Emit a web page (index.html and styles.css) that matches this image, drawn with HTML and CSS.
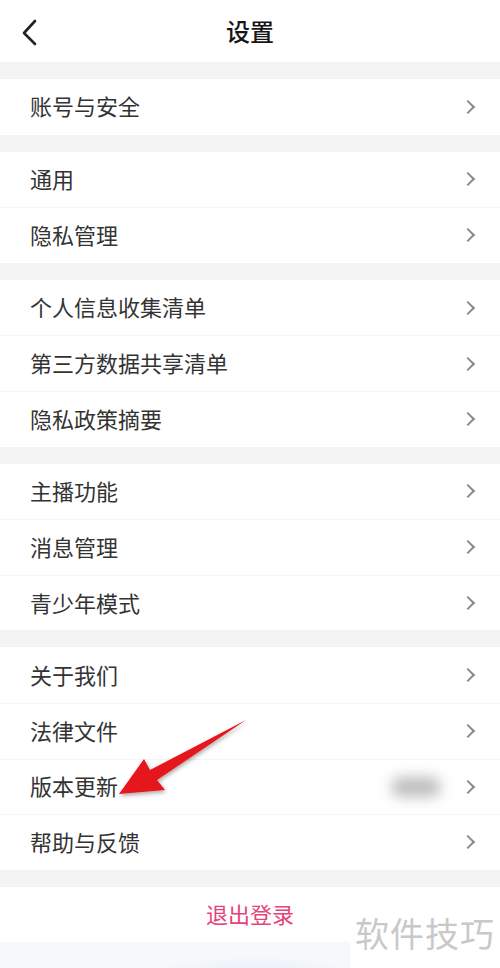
FILE: index.html
```html
<!DOCTYPE html>
<html lang="zh-CN">
<head>
  <meta charset="UTF-8" />
  <meta name="viewport" content="width=device-width, initial-scale=1.0" />
  <title>设置</title>
  <link rel="stylesheet" href="styles.css">
</head>
<body>
  <div class="page">
    <div class="header">
      <svg class="back" width="20" height="30" viewBox="0 0 20 30">
        <polyline points="14,4 3,16 14,27" fill="none" stroke="#222" stroke-width="2.6" stroke-linecap="round" stroke-linejoin="round"/>
      </svg>
      <div class="title">设置</div>
    </div>

    <div class="group">
      <div class="row"><span class="label">账号与安全</span><span class="chev"></span></div>
    </div>

    <div class="group">
      <div class="row"><span class="label">通用</span><span class="chev"></span></div>
      <div class="row"><span class="label">隐私管理</span><span class="chev"></span></div>
    </div>

    <div class="group">
      <div class="row"><span class="label">个人信息收集清单</span><span class="chev"></span></div>
      <div class="row"><span class="label">第三方数据共享清单</span><span class="chev"></span></div>
      <div class="row"><span class="label">隐私政策摘要</span><span class="chev"></span></div>
    </div>

    <div class="group">
      <div class="row"><span class="label">主播功能</span><span class="chev"></span></div>
      <div class="row"><span class="label">消息管理</span><span class="chev"></span></div>
      <div class="row"><span class="label">青少年模式</span><span class="chev"></span></div>
    </div>

    <div class="group">
      <div class="row"><span class="label">关于我们</span><span class="chev"></span></div>
      <div class="row"><span class="label">法律文件</span><span class="chev"></span></div>
      <div class="row"><span class="label">版本更新</span><span class="version"></span><span class="chev"></span></div>
      <div class="row"><span class="label">帮助与反馈</span><span class="chev"></span></div>
    </div>

    <div class="group">
      <div class="row logout">退出登录</div>
    </div>

    <div class="bottom"></div>

    <svg class="arrow" width="500" height="968" viewBox="0 0 500 968">
      <defs>
        <filter id="shadow" x="-20%" y="-20%" width="140%" height="140%">
          <feDropShadow dx="1" dy="2" stdDeviation="2" flood-color="#000" flood-opacity="0.35"/>
        </filter>
      </defs>
      <polygon points="119,794 144,759 150,770 246,720 157,780 165,790" fill="#e5141c" filter="url(#shadow)"/>
    </svg>

    <div class="watermark">软件技巧</div>
  </div>
</body>
</html>
```

FILE: styles.css
```css
body, html {
  margin: 0;
  padding: 0;
  height: 100%;
  overflow: hidden;
  font-family: "Noto Sans CJK SC", "Noto Sans", sans-serif;
}
.page {
  position: relative;
  width: 500px;
  height: 968px;
  background: #f4f4f4;
  display: flex;
  flex-direction: column;
  gap: 17px;
}
.header {
  height: 62px;
  background: #fff;
  display: flex;
  align-items: center;
  justify-content: center;
  position: relative;
}
.back {
  position: absolute;
  left: 21px;
  top: 17px;
}
.title {
  font-size: 24px;
  font-weight: 500;
  color: #161616;
  padding-bottom: 2px;
}
.group {
  background: #fff;
}
.row {
  height: 55.6px;
  box-sizing: border-box;
  display: flex;
  align-items: center;
  padding: 0 25px 0 30px;
  border-top: 1px solid #f5f5f5;
}
.row:first-child {
  border-top: none;
}
.label {
  flex: 1;
  font-size: 22px;
  color: #333;
  padding-bottom: 3px;
}
.chev {
  width: 8px;
  height: 8px;
  border-top: 2px solid #8a8a8a;
  border-right: 2px solid #8a8a8a;
  transform: rotate(45deg);
  margin-right: 2px;
}
.version {
  width: 50px;
  height: 20px;
  background: #bdbdbd;
  border-radius: 10px;
  filter: blur(7px);
  margin-right: 22px;
}
.logout {
  justify-content: center;
  padding: 0 0 3px;
  font-size: 22px;
  color: #e4447a;
}
.bottom {
  flex: 1;
  margin-top: -17px;
  background: radial-gradient(ellipse 110px 20px at 255px 34px, #e4eefa, #f7f8fa 100%);
}
.arrow {
  position: absolute;
  left: 0;
  top: 0;
  pointer-events: none;
}
.watermark {
  position: absolute;
  left: 350px;
  top: 904px;
  width: 150px;
  height: 64px;
  background: #fff;
  box-sizing: border-box;
  padding-left: 5px;
  font-size: 34px;
  line-height: 58px;
  color: #c9c9c9;
  letter-spacing: 1px;
}
```
